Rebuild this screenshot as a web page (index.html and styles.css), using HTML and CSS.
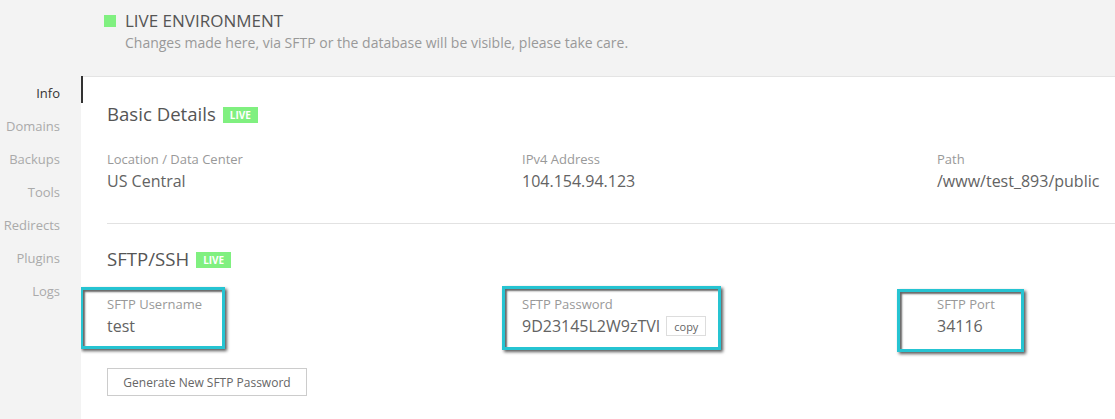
FILE: index.html
```html
<!DOCTYPE html>
<html lang="en">
<head>
    <meta charset="UTF-8">
    <title>Live Environment</title>
    <link rel="stylesheet" href="styles.css">
</head>
<body>
    <header class="env-header">
        <h1><span class="env-dot"></span>LIVE ENVIRONMENT</h1>
        <p>Changes made here, via SFTP or the database will be visible, please take care.</p>
    </header>

    <div class="layout">
        <nav class="side-nav">
            <a class="active">Info</a>
            <a>Domains</a>
            <a>Backups</a>
            <a>Tools</a>
            <a>Redirects</a>
            <a>Plugins</a>
            <a>Logs</a>
        </nav>

        <main class="panel">
            <section class="section">
                <h2>Basic Details <span class="badge">LIVE</span></h2>
                <div class="fields">
                    <div class="field">
                        <label>Location / Data Center</label>
                        <div class="value">US Central</div>
                    </div>
                    <div class="field">
                        <label>IPv4 Address</label>
                        <div class="value">104.154.94.123</div>
                    </div>
                    <div class="field">
                        <label>Path</label>
                        <div class="value">/www/test_893/public</div>
                    </div>
                </div>
            </section>

            <section class="section sftp">
                <h2>SFTP/SSH <span class="badge">LIVE</span></h2>
                <div class="fields">
                    <div class="field">
                        <span class="mark mark-user"></span>
                        <label>SFTP Username</label>
                        <div class="value">test</div>
                    </div>
                    <div class="field">
                        <span class="mark mark-pass"></span>
                        <label>SFTP Password</label>
                        <div class="value">9D23145L2W9zTVI <button class="copy">copy</button></div>
                    </div>
                    <div class="field">
                        <span class="mark mark-port"></span>
                        <label>SFTP Port</label>
                        <div class="value">34116</div>
                    </div>
                </div>
                <button class="btn">Generate New SFTP Password</button>
            </section>
        </main>
    </div>
</body>
</html>
```

FILE: styles.css
```css
html, body {
    height: 419px;
    overflow: hidden;
}
body {
    margin: 0;
    background: #f3f3f3;
    font-family: "Open Sans", "Liberation Sans", sans-serif;
    color: #555;
}
.env-header {
    padding: 10px 0 0 104px;
    height: 66px;
    box-sizing: border-box;
}
.env-header h1 {
    margin: 0;
    font-size: 17px;
    font-weight: 400;
    color: #555;
    line-height: 22px;
    display: flex;
    align-items: center;
}
.env-dot {
    width: 12px;
    height: 12px;
    background: #80f080;
    margin-right: 9px;
}
.env-header p {
    margin: 1px 0 0 21px;
    font-size: 14px;
    color: #999;
    line-height: 20px;
}
.layout {
    display: flex;
}
.side-nav {
    width: 81px;
    flex-shrink: 0;
    padding-top: 11px;
    display: flex;
    flex-direction: column;
}
.side-nav a {
    display: block;
    text-align: right;
    padding-right: 21px;
    font-size: 13px;
    line-height: 33px;
    color: #aaa;
}
.side-nav a.active {
    color: #333;
    position: relative;
}
.side-nav a.active::after {
    content: "";
    position: absolute;
    right: -2px;
    top: -1px;
    bottom: 7px;
    width: 2px;
    background: #333;
}
.panel {
    flex: 1;
    min-width: 0;
    background: #fff;
    border-top: 1px solid #e4e4e4;
    margin-top: 10px;
    padding-left: 26px;
    height: 343px;
    overflow: hidden;
}
.section h2 {
    margin: 0;
    font-size: 18.6px;
    font-weight: 400;
    color: #555;
    line-height: 24px;
    display: flex;
    align-items: center;
}
.section:first-child {
    padding-top: 25px;
    padding-bottom: 29px;
    border-bottom: 1px solid #e2e2e2;
}
.badge {
    background: #80f080;
    color: #fff;
    font-size: 10px;
    font-weight: 700;
    padding: 0 7px;
    line-height: 16px;
    margin-left: 7px;
    margin-top: 1px;
}
.fields {
    display: grid;
    grid-template-columns: 415px 415px 1fr;
    margin-top: 24px;
}
.field {
    position: relative;
    white-space: nowrap;
}
.field label {
    display: block;
    font-size: 13px;
    color: #999;
    line-height: 18px;
}
.field .value {
    font-size: 16px;
    color: #636363;
    line-height: 26px;
    display: flex;
    align-items: center;
}
.sftp {
    padding-top: 23px;
}
.sftp .fields {
    margin-top: 24px;
}
.copy {
    font-family: inherit;
    font-size: 11px;
    color: #666;
    background: #fff;
    border: 1px solid #ddd;
    padding: 0 7px;
    height: 20px;
    margin-left: 6px;
}
.btn {
    margin-top: 29px;
    font-family: inherit;
    font-size: 12px;
    color: #666;
    background: #fff;
    border: 1px solid #ccc;
    height: 28px;
    width: 200px;
}
/* annotation boxes drawn over the fields */
.mark {
    position: absolute;
    border: 3px solid #26c4d2;
    box-shadow: 2px 2px 3px rgba(0, 0, 0, 0.65), inset 2px 2px 2px rgba(0, 0, 0, 0.6);
}
.mark-user {
    left: -27px;
    top: -8px;
    width: 139px;
    height: 56px;
}
.mark-pass {
    left: -20px;
    top: -9px;
    width: 213px;
    height: 58px;
}
.mark-port {
    left: -40px;
    top: -6px;
    width: 121px;
    height: 57px;
}
```
